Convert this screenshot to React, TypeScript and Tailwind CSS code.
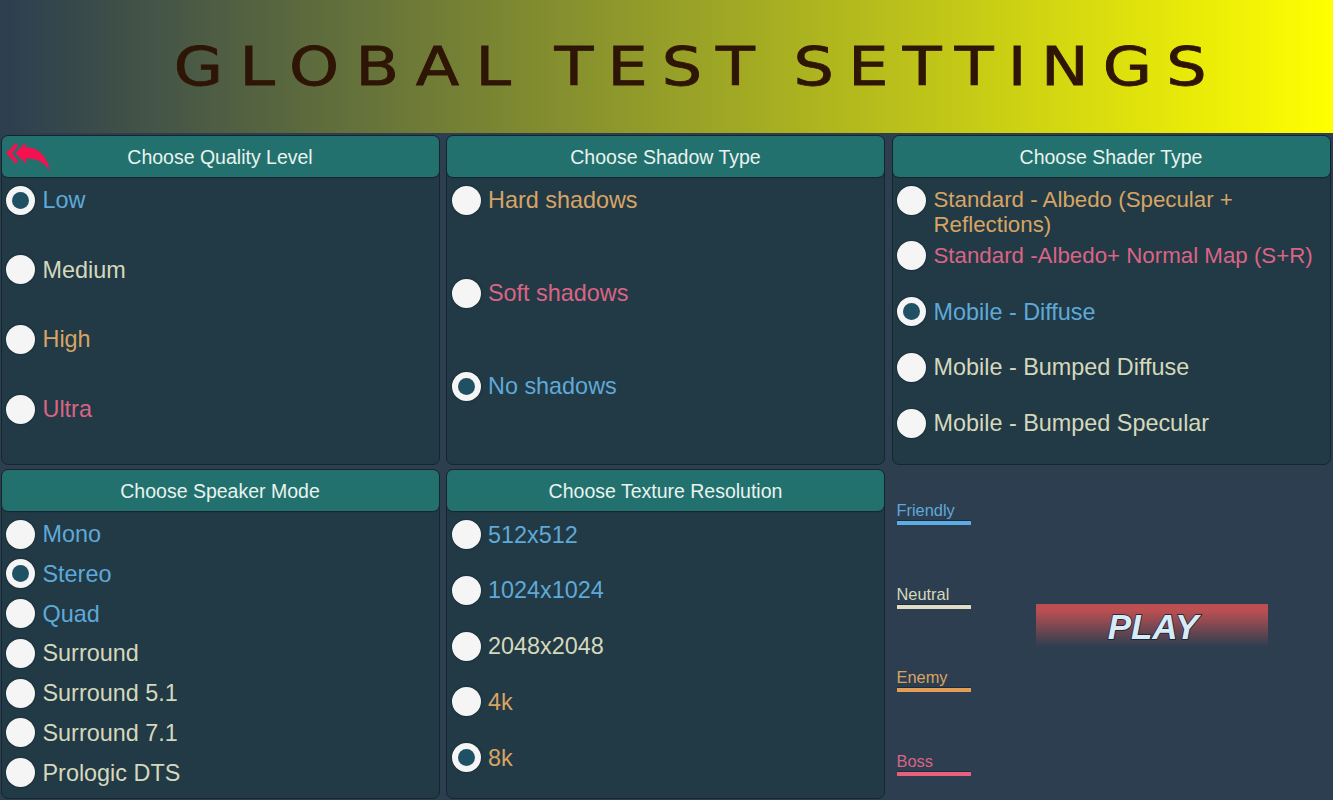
const BLUE = "text-[#5fa9d8]";
const CREAM = "text-[#d5d8bc]";
const ORANGE = "text-[#d8a464]";
const PINK = "text-[#db6484]";

type Opt = { label: string; color: string; checked?: boolean; small?: boolean };

function Radio({ label, color, checked, small }: Opt) {
  return (
    <div className="flex items-start">
      <div className="flex h-[29px] w-[29px] shrink-0 items-center justify-center rounded-full bg-[#f5f5f5] shadow-[0_0_2px_#0d1c24]">
        {checked && <div className="h-[17px] w-[17px] rounded-full bg-[#205064]" />}
      </div>
      <span
        className={`ml-[7.5px] w-[385px] leading-[25px] ${small ? "mt-[1.5px] text-[22.3px]" : "mt-[2.5px] text-[23.4px]"} ${color}`}
      >
        {label}
      </span>
    </div>
  );
}

function Panel({ title, rows, options, icon }: { title: string; rows: string; options: Opt[]; icon?: boolean }) {
  return (
    <section className="relative h-[330px] rounded-[7px] border border-[#16262f] bg-[#213a46]">
      <header className="flex h-[41px] items-center justify-center rounded-[6px] bg-[#22716f] pt-[2px] text-[19.5px] text-[#e9f3ee] shadow-[0_1px_1px_#16262f]">
        {title}
      </header>
      {icon && (
        <svg className="absolute -left-[2px] top-0" width="54" height="42" viewBox="0 48 162 126" aria-hidden="true">
          <path d="M18 100 L48 68 L54 78 L36 100 L54 122 L48 132 Z" fill="#f5104f" />
          <path d="M45 100 L75 68 L77 82 C112 80 142 108 150 154 C134 128 110 114 77 116 L80 132 Z" fill="#f5104f" />
        </svg>
      )}
      <div className={`grid pl-[4.5px] ${rows}`}>
        {options.map((o) => (
          <Radio key={o.label} {...o} />
        ))}
      </div>
    </section>
  );
}

function Legend({ label, color, bar }: { label: string; color: string; bar: string }) {
  return (
    <div className="w-[74px]">
      <div className={`text-[16.4px] leading-[17px] ${color}`}>{label}</div>
      <div className={`mt-[2px] h-[4px] shadow-[0_-1px_0_#14303f] ${bar}`} />
    </div>
  );
}

export default function App() {
  return (
    <div className="h-[800px] w-[1333px] overflow-hidden bg-[#2c3e50] font-['Liberation_Sans',Arial,sans-serif]">
      <div className="flex h-[133px] items-center justify-center bg-linear-to-r/srgb from-[#2c3e50] to-[#ffff00] pl-[62px]">
        <h1 className="origin-center scale-x-[1.2] font-['DejaVu_Sans',sans-serif] text-[53px] leading-none [word-spacing:-8px] whitespace-nowrap text-[#2e1505] [-webkit-text-stroke:0.8px_#2e1505]">
          <span className="tracking-[13.7px]">GLOBAL </span>
          <span className="tracking-[11.7px]">TEST </span>
          <span className="tracking-[11.9px]">SETTINGS</span>
        </h1>
      </div>
      <div className="mt-[2px] grid grid-cols-[439px_439px_439px] gap-x-[6.5px] gap-y-[4px] pl-[0.5px]">
        <Panel
          title="Choose Quality Level"
          icon
          rows="pt-[8.5px] auto-rows-[69.7px]"
          options={[
            { label: "Low", color: BLUE, checked: true },
            { label: "Medium", color: CREAM },
            { label: "High", color: ORANGE },
            { label: "Ultra", color: PINK },
          ]}
        />
        <Panel
          title="Choose Shadow Type"
          rows="pt-[8.5px] auto-rows-[93px]"
          options={[
            { label: "Hard shadows", color: ORANGE },
            { label: "Soft shadows", color: PINK },
            { label: "No shadows", color: BLUE, checked: true },
          ]}
        />
        <Panel
          title="Choose Shader Type"
          rows="pt-[8.5px] auto-rows-[55.8px]"
          options={[
            { label: "Standard - Albedo (Specular + Reflections)", color: ORANGE, small: true },
            { label: "Standard -Albedo+ Normal Map (S+R)", color: PINK, small: true },
            { label: "Mobile - Diffuse", color: BLUE, checked: true },
            { label: "Mobile - Bumped Diffuse", color: CREAM },
            { label: "Mobile - Bumped Specular", color: CREAM },
          ]}
        />
        <Panel
          title="Choose Speaker Mode"
          rows="pt-[8.5px] auto-rows-[39.8px]"
          options={[
            { label: "Mono", color: BLUE },
            { label: "Stereo", color: BLUE, checked: true },
            { label: "Quad", color: BLUE },
            { label: "Surround", color: CREAM },
            { label: "Surround 5.1", color: CREAM },
            { label: "Surround 7.1", color: CREAM },
            { label: "Prologic DTS", color: CREAM },
          ]}
        />
        <Panel
          title="Choose Texture Resolution"
          rows="pt-[9px] auto-rows-[55.8px]"
          options={[
            { label: "512x512", color: BLUE },
            { label: "1024x1024", color: BLUE },
            { label: "2048x2048", color: CREAM },
            { label: "4k", color: ORANGE },
            { label: "8k", color: ORANGE, checked: true },
          ]}
        />
        <section className="flex h-[330px] items-start pl-[5px] pt-[33px]">
          <div className="flex h-[274px] flex-col justify-between">
            <Legend label="Friendly" color={BLUE} bar="bg-[#5dade2]" />
            <Legend label="Neutral" color={CREAM} bar="bg-[#e2dcc4]" />
            <Legend label="Enemy" color={ORANGE} bar="bg-[#e09f55]" />
            <Legend label="Boss" color={PINK} bar="bg-[#e8607c]" />
          </div>
          <button className="ml-[65px] mt-[102px] flex h-[43px] w-[232px] items-center justify-center bg-linear-to-b/srgb from-[#bb4f52] from-15% to-[#2c3e50] pl-[3px] pt-[3px] text-[35px] font-bold italic text-[#d6eaf8] [-webkit-text-stroke:1.5px_#14202a] [paint-order:stroke_fill]">
            PLAY
          </button>
        </section>
      </div>
    </div>
  );
}
